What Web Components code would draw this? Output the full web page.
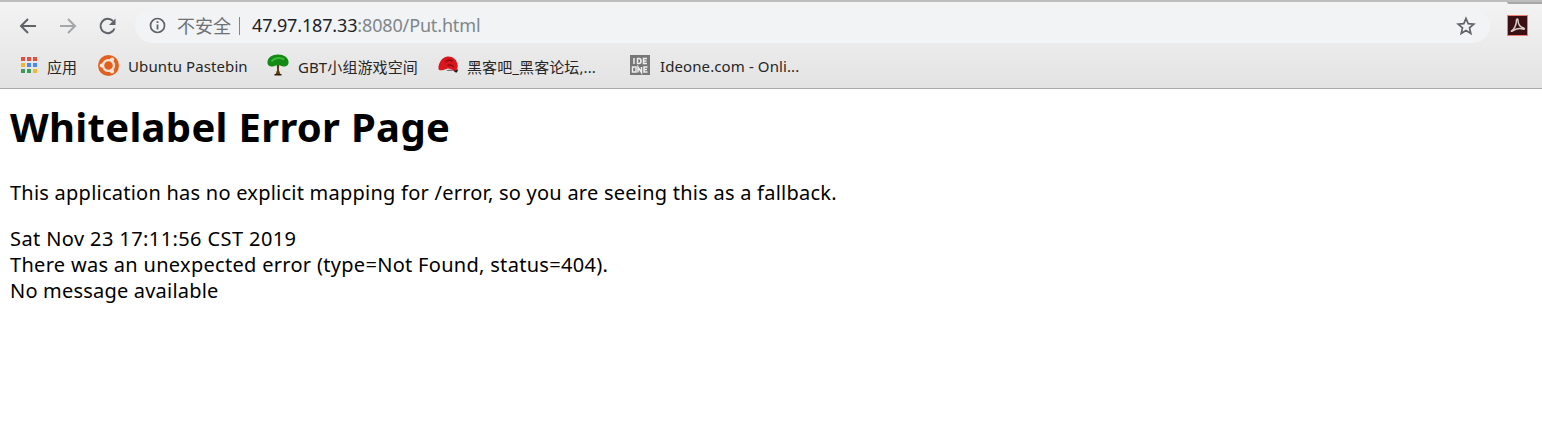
<!DOCTYPE html>
<html>
<head>
<meta charset="utf-8">
<title>Whitelabel Error Page</title>
<style>
	html, body { margin: 0; padding: 0; background: #fff; }
</style>
</head>
<body>
<browser-toolbar>
	<bookmark-item slot="bookmarks" label="应用" width="79" style="--label-gap: 7px">
		<svg slot="icon" width="18" height="18" viewBox="0 0 18 18">
			<g fill="#e0523f"><rect x="1" y="1" width="4" height="4"/><rect x="7" y="1" width="4" height="4"/><rect x="13" y="1" width="4" height="4"/></g>
			<g fill="#4a8af0"><rect x="7" y="7" width="4" height="4"/><rect x="13" y="7" width="4" height="4"/></g>
			<rect x="1" y="7" width="4" height="4" fill="#f2b632"/>
			<g fill="#3a9d5c"><rect x="1" y="13" width="4" height="4"/><rect x="7" y="13" width="4" height="4"/></g>
			<rect x="13" y="13" width="4" height="4" fill="#f2b632"/>
		</svg>
	</bookmark-item>
	<bookmark-item slot="bookmarks" label="Ubuntu Pastebin" width="170">
		<svg slot="icon" width="21" height="21" viewBox="0 0 20 20">
			<circle cx="10" cy="10" r="10" fill="#e2601f"/>
			<circle cx="10" cy="10" r="5.2" fill="none" stroke="#fbe3d4" stroke-width="2.2"/>
			<circle cx="3.6" cy="10" r="2" fill="#fbe3d4"/>
			<circle cx="13.4" cy="4.4" r="2" fill="#fbe3d4"/>
			<circle cx="13.4" cy="15.6" r="2" fill="#fbe3d4"/>
		</svg>
	</bookmark-item>
	<bookmark-item slot="bookmarks" label="GBT小组游戏空间" width="170">
		<svg slot="icon" width="22" height="22" viewBox="0 0 22 22">
			<path d="M9.8 11h2.400l-.3 5 1.600 4.500H8.500l1.600-4.500z" fill="#5c3d0c"/>
			<path d="M7.500 20h7v1.500h-7z" fill="#2e2005"/>
			<path d="M5.500 12.500C2 12.500 0 10.500 .5 7.500 1 3.500 5 .5 11 .5s10 3 10.500 7c.5 3-1.500 5-5 5-2 0-3.500-1.500-5.500-1.500s-3.500 1.500-5.500 1.500z" fill="#128a14"/>
			<path d="M4.500 7.500c2-3 8-5 12.500-2" fill="none" stroke="#3cb83a" stroke-width="2.200"/>
		</svg>
	</bookmark-item>
	<bookmark-item slot="bookmarks" label="黑客吧_黑客论坛,..." width="192" style="--label-gap: 8px">
		<svg slot="icon" width="21" height="21" viewBox="0 0 20 20">
			<path d="M8 15c2-1.500 6-1 8.500 1.500 1.500 1 2.500-1 2.500-3l-4 1z" fill="#1c1c1c"/>
			<path d="M.5 13.500C0 8.500 3.500 2 9 1.500c5-.5 8.500 3 9.500 7 .8 3-.5 6.500-2.500 6.500-2.500 0-4.500-2.500-7.500-2C6 13.500 3 16 .5 13.500z" fill="#d9161d"/>
			<path d="M7 6.500c2-1.500 5-2 7-.5M9 10c2-.8 4-.6 6 1" fill="none" stroke="#8c0d12" stroke-width="1.500"/>
		</svg>
	</bookmark-item>
	<bookmark-item slot="bookmarks" label="Ideone.com - Onli...">
		<svg slot="icon" width="20" height="20" viewBox="0 0 20 20">
			<rect width="20" height="20" fill="#777"/>
			<g fill="none" stroke="#eee" stroke-width="1.500">
				<path d="M4 3v6M7.500 3v6M7.500 3.500h1.500q2 0 2 2.500t-2 2.500H7.500M17 3.500h-3.500v5H17M13.500 6h3"/>
				<path d="M2.500 12h3.500v5H2.500zM8 17.500V12l3.500 5.500V12M17.500 12H14v5h3.500M14 14.500h3"/>
			</g>
		</svg>
	</bookmark-item>
</browser-toolbar>
<error-page>
	<span slot="title">Whitelabel Error Page</span>
	<span slot="message">This application has no explicit mapping for /error, so you are seeing this as a fallback.</span>
	<div slot="details" style="letter-spacing: 0.4px">Sat Nov 23 17:11:56 CST 2019</div>
	<div slot="details" style="letter-spacing: 0.3px">There was an unexpected error (type=Not Found, status=404).</div>
	<div slot="details" style="letter-spacing: 0.2px">No message available</div>
</error-page>
<script>
const BrowserToolbarTemplate = document.createElement('template');
BrowserToolbarTemplate.innerHTML = `
	<style>
		:host {
			display: block;
			position: relative;
			height: 89px;
			box-sizing: border-box;
			border-top: 2px solid #bdbdbd;
			border-bottom: 1px solid #a9a9a9;
			background: linear-gradient(180deg, #f3f3f3 0%, #e3e3e3 100%);
			font-family: "Noto Sans", "Noto Sans CJK SC", sans-serif;
			overflow: hidden;
		}
		.tab-edge {
			position: absolute;
			top: 0;
			right: 0;
			width: 35px;
			height: 2px;
			background: #a8a8a8;
			border-bottom-left-radius: 3px;
		}
		.nav {
			display: flex;
			align-items: center;
			height: 37px;
			margin-top: 5px;
			padding-left: 16px;
		}
		.btn {
			display: flex;
			width: 24px;
			height: 24px;
			align-items: center;
			justify-content: center;
			margin-right: 16px;
		}
		.btn.last { margin-right: 15px; }
		.omnibox {
			display: flex;
			align-items: center;
			width: 1355px;
			height: 35px;
			border-radius: 18px;
			background: #f1f3f4;
			padding-left: 14px;
			box-sizing: border-box;
			font-size: 18px;
			white-space: nowrap;
		}
		.info { margin-right: 11px; flex: none; }
		.text {
			position: relative;
			top: -1px;
		}
		.insecure { color: #6e7175; font-size: 18px; }
		.sep { width: 1px; height: 18px; background: #80868b; margin: 0 12px 0 8px; }
		.host { color: #202124; letter-spacing: -0.15px; }
		.rest { color: #80868b; letter-spacing: -0.15px; }
		.star { margin-left: auto; margin-right: 14px; flex: none; }
		.pdf { margin-left: 17px; flex: none; }
		.bookmarks {
			display: flex;
			align-items: center;
			height: 36px;
			margin-top: 3px;
			padding-left: 18px;
		}
	</style>
	<div class="tab-edge"></div>
	<div class="nav">
		<div class="btn">
			<svg width="20" height="20" viewBox="0 0 20 20" fill="none" stroke="#5f6368" stroke-width="2"><path d="M18 10H3M10 3l-7 7 7 7"/></svg>
		</div>
		<div class="btn">
			<svg width="20" height="20" viewBox="0 0 20 20" fill="none" stroke="#a4a7aa" stroke-width="2"><path d="M2 10h15M10 3l7 7-7 7"/></svg>
		</div>
		<div class="btn last">
			<svg width="20" height="20" viewBox="0 0 20 20" fill="none"><path d="M16.500 12.500A7.200 7.200 0 1 1 15 5" stroke="#5f6368" stroke-width="2"/><path d="M17.500 2.500v6.500H11z" fill="#5f6368"/></svg>
		</div>
		<div class="omnibox">
			<svg class="info" width="17" height="17" viewBox="0 0 17 17" fill="none"><circle cx="8.500" cy="8.500" r="7" stroke="#5f6368" stroke-width="1.700"/><path d="M8.500 7.500v5" stroke="#5f6368" stroke-width="1.800"/><path d="M8.500 4.200v1.800" stroke="#5f6368" stroke-width="1.800"/></svg>
			<span class="insecure text">不安全</span>
			<span class="sep"></span>
			<span class="text"><span class="host">47.97.187.33</span><span class="rest">:8080/Put.html</span></span>
			<svg class="star" width="20" height="20" viewBox="0 0 20 20" fill="none" stroke="#5f6368" stroke-width="1.700" stroke-linejoin="miter"><path d="M10 2.500l2.200 5.200 5.600.5-4.300 3.700 1.300 5.500L10 14.500l-4.800 2.900 1.300-5.500-4.300-3.700 5.600-.5z"/></svg>
		</div>
		<svg class="pdf" width="21" height="21" viewBox="0 0 21 21">
			<rect x=".5" y=".5" width="20" height="20" fill="#3a1013" stroke="#ef7f74"/>
			<path d="M4.500 16C7 14.500 9.500 10 9.500 5c0-1.500 1.500-1.500 1.500 0 0 4 2.500 7 5.500 8 1.500.5 1 1.500-.5 1-3.500-.8-6.500-.6-9.500 1.500-1.500 1-2.500 1-2 .5z" fill="none" stroke="#d9cbc8" stroke-width="1.500"/>
		</svg>
	</div>
	<div class="bookmarks"><slot name="bookmarks"></slot></div>
`;

class BrowserToolbar extends HTMLElement {
	constructor() {
		super();
		const shadowRoot = this.attachShadow({mode: 'open'});
		shadowRoot.append(BrowserToolbarTemplate.content.cloneNode(true));
	}
}

const BookmarkItemTemplate = document.createElement('template');
BookmarkItemTemplate.innerHTML = `
	<style>
		:host {
			display: flex;
			align-items: center;
			flex: none;
			box-sizing: border-box;
			height: 36px;
			color: #262626;
			font-size: 15px;
			letter-spacing: 0.1px;
			white-space: nowrap;
		}
		.icon {
			display: flex;
			align-items: center;
			justify-content: center;
			width: 22px;
			margin-right: var(--label-gap, 9px);
		}
		.label { position: relative; top: 1px; }
	</style>
	<span class="icon"><slot name="icon"></slot></span>
	<span class="label"></span>
`;

class BookmarkItem extends HTMLElement {
	constructor() {
		super();
		const shadowRoot = this.attachShadow({mode: 'open'});
		shadowRoot.append(BookmarkItemTemplate.content.cloneNode(true));
		shadowRoot.querySelector('.label').textContent = this.getAttribute('label');
		if (this.hasAttribute('width')) this.style.width = this.getAttribute('width') + 'px';
	}
}

const ErrorPageTemplate = document.createElement('template');
ErrorPageTemplate.innerHTML = `
	<style>
		:host {
			display: block;
			padding: 0 10px;
			color: #000;
			font-family: "Noto Sans", "Noto Sans CJK SC", sans-serif;
			font-size: 20px;
			letter-spacing: 0.24px;
			line-height: 26px;
		}
		h1 {
			margin: 0;
			padding-top: 11px;
			font-size: 40px;
			letter-spacing: 0.3px;
			line-height: 54px;
			font-weight: 700;
		}
		p {
			margin: 0;
			padding-top: 26px;
		}
		.details { padding-top: 20px; }
	</style>
	<h1><slot name="title"></slot></h1>
	<p><slot name="message"></slot></p>
	<div class="details"><slot name="details"></slot></div>
`;

class ErrorPage extends HTMLElement {
	constructor() {
		super();
		const shadowRoot = this.attachShadow({mode: 'open'});
		shadowRoot.append(ErrorPageTemplate.content.cloneNode(true));
	}
}

customElements.define('browser-toolbar', BrowserToolbar);
customElements.define('bookmark-item', BookmarkItem);
customElements.define('error-page', ErrorPage);
</script>
</body>
</html>
